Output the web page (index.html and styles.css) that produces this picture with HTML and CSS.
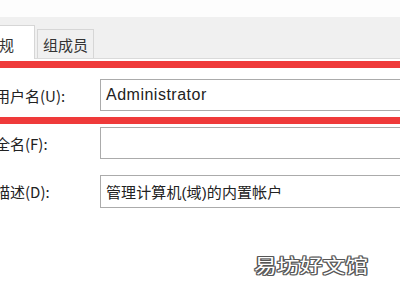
FILE: index.html
```html
<!DOCTYPE html>
<html lang="zh-CN">
<head>
<meta charset="utf-8">
<title>Administrator 属性</title>
<link rel="stylesheet" href="styles.css">
</head>
<body>
<div class="dialog">
  <div class="top-strip"></div>
  <div class="tabbar">
    <div class="tab active">常规</div>
    <div class="tab">组成员</div>
  </div>
  <div class="panel">
    <div class="row">
      <div class="label">用户名(U):</div>
      <div class="field latin">Administrator</div>
    </div>
    <div class="row">
      <div class="label">全名(F):</div>
      <div class="field"></div>
    </div>
    <div class="row">
      <div class="label">描述(D):</div>
      <div class="field">管理计算机(域)的内置帐户</div>
    </div>
  </div>
  <div class="mark mark-1"></div>
  <div class="mark mark-2"></div>
  <div class="watermark">易坊好文馆</div>
</div>
</body>
</html>
```
FILE: styles.css
```css
html, body {
  margin: 0;
  padding: 0;
}
body {
  width: 400px;
  height: 300px;
  overflow: hidden;
  background: #ffffff;
  font-family: "Noto Sans CJK SC", "Noto Sans", sans-serif;
  color: #222;
}
.dialog {
  position: relative;
  width: 400px;
  height: 300px;
  overflow: hidden;
}
.top-strip {
  height: 17px;
  background: #fdfdfd;
}
.tabbar {
  height: 41px;
  background: #f0f0f0;
  display: flex;
  align-items: flex-end;
  gap: 2px;
  border-bottom: 1px solid #dadada;
}
.tab {
  font-size: 15px;
  line-height: 15px;
  box-sizing: border-box;
  height: 29px;
  padding: 7px 5px 0 5px;
  background: #f0f0f0;
  border: 1px solid #d6d6d6;
  border-bottom: none;
  color: #333;
}
.tab.active {
  height: 34px;
  padding-top: 11px;
  margin-left: -16px;
  padding-left: 0;
  padding-right: 20px;
  background: #ffffff;
  margin-bottom: -1px;
  border-left: none;
}
.panel {
  padding-top: 20px;
  display: grid;
  grid-template-rows: 32px 32px 33px;
  row-gap: 16px;
}
.row {
  display: flex;
  align-items: center;
  margin-left: -5px;
}
.label {
  width: 105px;
  flex: none;
  font-size: 15px;
  color: #222;
}
.field {
  flex: none;
  box-sizing: border-box;
  width: 320px;
  height: 100%;
  border: 1px solid #ababab;
  padding-left: 5px;
  display: flex;
  align-items: center;
  font-family: "Liberation Sans", "Noto Sans CJK SC", sans-serif;
  font-size: 15px;
  letter-spacing: 0.1px;
  color: #222;
  background: #fff;
}
.field.latin {
  font-size: 16px;
  letter-spacing: 0.5px;
}
.mark {
  position: absolute;
  left: 0;
  width: 400px;
  height: 7px;
  background: #ef3a3a;
}
.mark-1 {
  top: 61px;
}
.mark-2 {
  top: 117px;
}
.watermark {
  position: absolute;
  left: 254px;
  top: 254px;
  font-size: 19px;
  line-height: 22px;
  color: #ffffff;
  transform: scaleX(1.2);
  transform-origin: left center;
  text-shadow:
    1px 0 0 #555, -1px 0 0 #555, 0 1px 0 #555, 0 -1px 0 #555,
    1px 1px 0 #666, -1px -1px 0 #666, 1px -1px 0 #666, -1px 1px 0 #666;
}
```
